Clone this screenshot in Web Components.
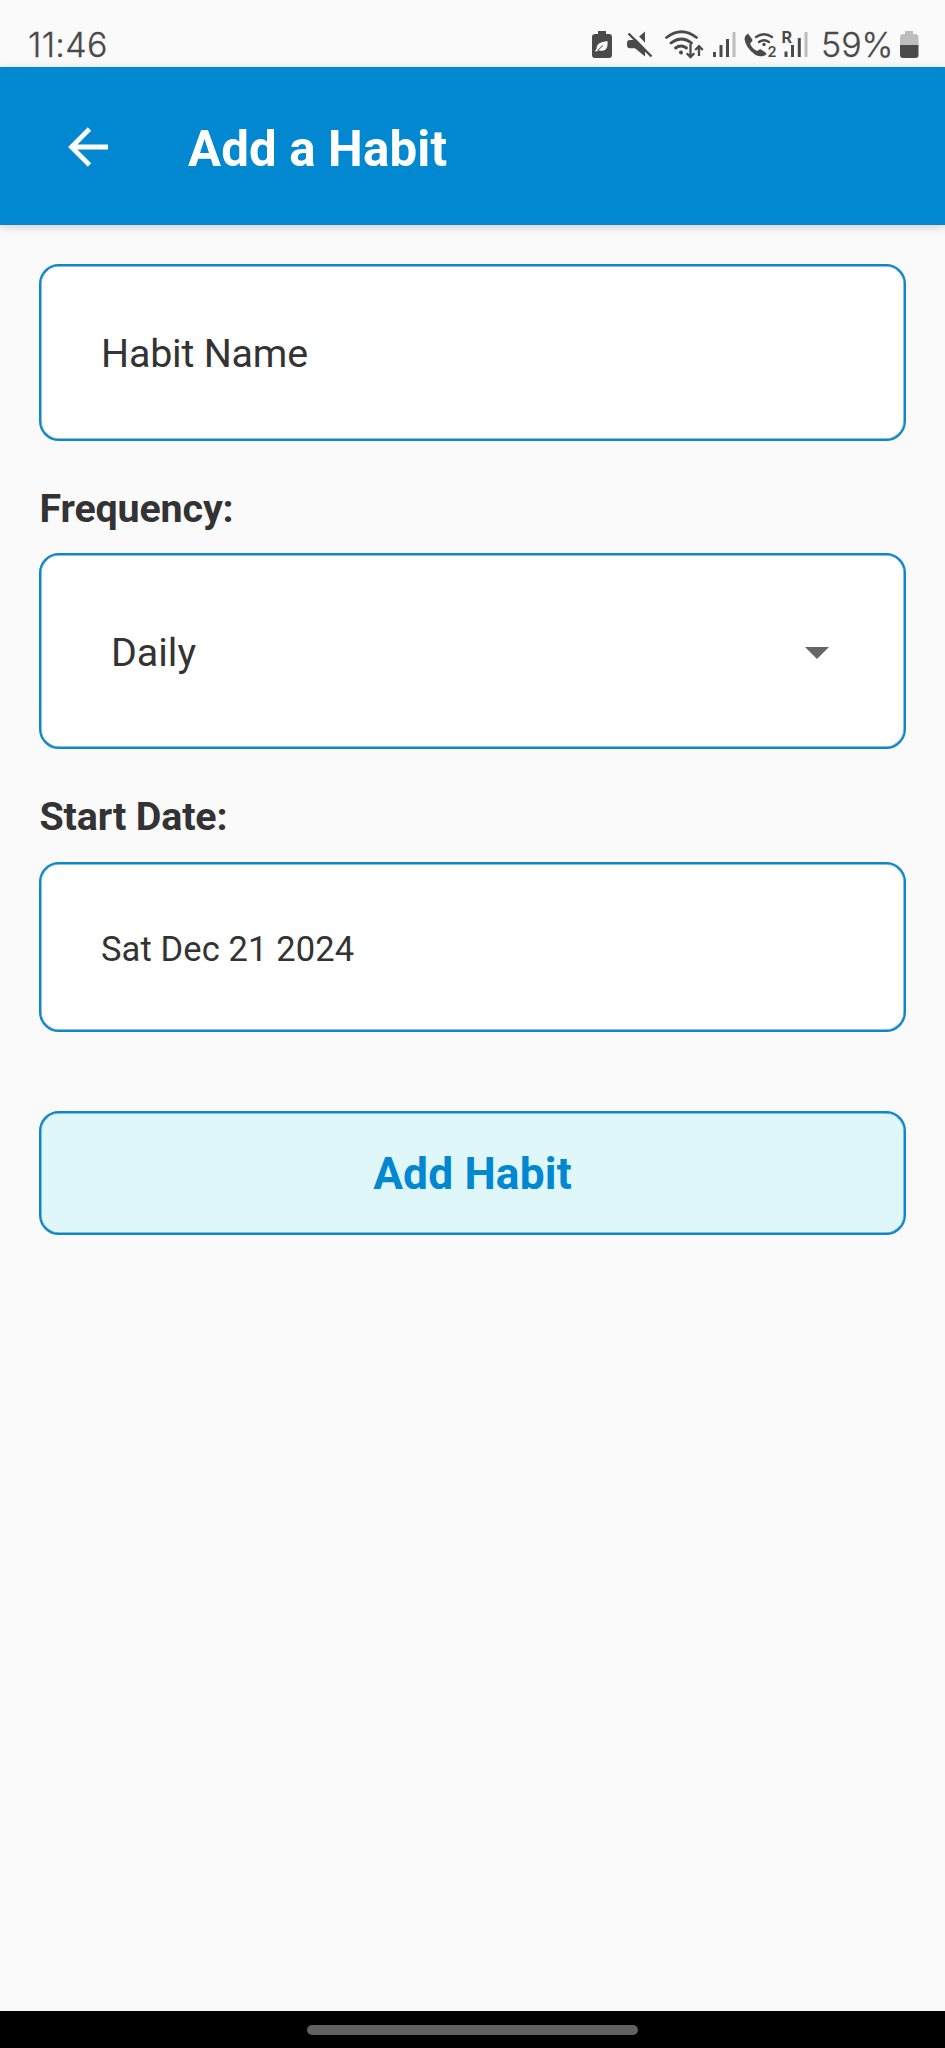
<!DOCTYPE html>
<html lang="en">
<head>
<meta charset="utf-8">
<title>Add a Habit</title>
<style>
html,body{margin:0;height:100%;background:#fafafa}
body{font-family:Roboto,"Liberation Sans",sans-serif;color:#333}
</style>
</head>
<body>
<habit-screen></habit-screen>
<script>
function define(name, html){
  const t = document.createElement('template');
  t.innerHTML = html;
  customElements.define(name, class extends HTMLElement{
    constructor(){
      super();
      this.attachShadow({mode:'open'}).append(t.content.cloneNode(true));
    }
  });
}

define('status-bar', `
<style>
:host{display:flex;box-sizing:border-box;height:67px;padding:28px 26px 0 28px;color:#4a4a4a;font:300 34px/34px Inter,sans-serif}
.time{flex:1;letter-spacing:.3px;-webkit-text-stroke:.3px}
.pct{width:79px;margin-left:-2px;letter-spacing:0;-webkit-text-stroke:.3px}
svg{display:block;height:34px;fill:currentColor;flex:none}
.s{fill:none;stroke:currentColor}
.time,.pct{white-space:nowrap}
</style>
<span class="time">11:46</span>
<svg width="34" viewBox="592 28 34 34"><path d="M598 31h8v3h3q3 0 3 3v18q0 3-3 3h-14q-3 0-3-3v-18q0-3 3-3h3z"/><path fill="#fafafa" d="M607.500 41c.6 6-1 9.500-5 9.700-2 .1-3.700-.2-4.500-.5l-2 1.500-1-1.300 1.700-1.400c-.6-4.700 3-7 10.800-8z"/><path class="s" stroke-width="1" d="M598 50l5-4.500"/></svg>
<svg width="39" viewBox="626 28 39 34"><path d="M627 43q0-3 3-3h5l10-8.500v25l-10-8.300h-5q-3 0-3-3z"/><path stroke="#fafafa" stroke-width="4" d="M631 31l23 24"/><path stroke="currentColor" stroke-width="2.400" d="M628.500 33.500l23 23"/></svg>
<svg width="47" viewBox="665 28 47 34"><g class="s" stroke-width="2.800" stroke-linecap="round"><path d="M666.500 37.500q15-11.500 30 0M671 43q10.500-8 20.500 0M675.500 48q5.500-4 11 0"/></g><circle cx="681" cy="52.500" r="2"/><path class="s" stroke-width="2.300" d="M690.500 44v13M686.700 53.200l3.800 3.800 3.800-3.800M699 56V46M695.200 50l3.800-3.800 3.800 3.800"/></svg>
<svg width="32" viewBox="712 28 32 34"><path d="M713 52h3v5h-3zM719.500 45h3v12h-3zM726 39h3v18h-3z"/><path fill="#bdbdbd" d="M732.500 32h3v25h-3z"/></svg>
<svg width="38" viewBox="744 28 38 34"><path d="M748 33.500l4 5.500q1 1.500-.5 3l-1.500 1.500q1.700 4.500 7 7.500l2-1.300q1.300-.8 2.500 0l4.500 3.300q.8.700 0 1.700-4.500 3-10.500.2Q745.500 48 744.500 39q-.2-3 3.500-5.500z"/><g class="s" stroke-width="2.300" stroke-linecap="round"><path d="M756 37q8-5.500 16 0M759 42q5-3.500 10 0"/></g><circle cx="764" cy="44.500" r="1.700"/><text x="767.500" y="56.500" font-family="Inter,sans-serif" font-size="14.500" font-weight="600">2</text></svg>
<svg width="41" viewBox="782 28 41 34"><text x="781.500" y="42.500" font-family="Roboto,sans-serif" font-size="16.500" font-weight="700">R</text><path d="M784.500 51.500h3v5.500h-3zM791 45h3v12h-3zM797.800 38h3v19h-3z"/><path fill="#bdbdbd" d="M804.500 32h3v25h-3z"/></svg>
<span class="pct">59%</span>
<svg width="19" viewBox="900 28 19 34"><path fill="#bdbdbd" d="M905 31h8v3h2q3.500 0 3.500 3.500V46H900v-8.500q0-3.500 3-3.500h2z"/><path d="M900 45h18.500v10q0 3-3 3H903q-3 0-3-3z"/></svg>
`);

define('app-header', `
<style>
:host{display:flex;align-items:center;box-sizing:border-box;height:158px;padding-left:68px;background:#0288d1;color:#fff;box-shadow:0 2px 9px rgba(0,0,0,.18)}
svg{display:block;margin:1px 80px 0 0}
h1{margin:5px 0 0;font:700 49.200px/58px Roboto,sans-serif;letter-spacing:.15px;white-space:nowrap}
</style>
<svg width="40" height="40" viewBox="0 0 40 40" fill="none" stroke="#fff" stroke-width="4.800"><path d="M40 20H4M21.500 2L3.500 20l18 18"/></svg>
<h1><slot></slot></h1>
`);

define('outlined-box', `
<style>
:host{display:flex;align-items:center;box-sizing:border-box;border:2px solid #0e86c8;box-shadow:inset 0 0 0 .5px #0e86c8;border-radius:20px;background:#fff;font-size:39.400px;line-height:46px;white-space:nowrap}
</style>
<slot></slot>
`);

define('field-label', `
<style>:host{display:block;font:700 39.400px/46px Roboto,sans-serif;letter-spacing:-.15px}</style>
<slot></slot>
`);

define('drop-arrow', `
<style>:host{display:block}svg{display:block}</style>
<svg width="24" height="12" viewBox="0 0 24 12"><path fill="#666" d="M0 0h24L12 12z"/></svg>
`);

define('nav-bar', `
<style>
:host{display:flex;justify-content:center;box-sizing:border-box;height:37px;padding-top:14px;background:#000}
i{width:331px;height:10px;border-radius:5px;background:#616161}
</style><i></i>
`);

define('habit-screen', `
<style>
:host{display:flex;flex-direction:column;height:2048px;background:#fafafa;overflow:hidden}
main{flex:1;display:flex;flex-direction:column;padding:39px 39px 0}
.name{height:177px;padding:3px 60px 0;letter-spacing:-.2px}
field-label{margin:45px 0 21px .5px}
.freq{height:196px;padding:3px 75px 0 70px;justify-content:space-between}
.freq span{padding-top:1px}
field-label.start{margin:45px 0 22px .5px}
.date{height:170px;padding:4px 60px 0;font-size:34.500px;letter-spacing:.12px}
.add{height:124px;margin-top:79px;padding-top:1px;justify-content:center;background:#e0f7fa;color:#0288d1;font-size:44.300px;font-weight:700;letter-spacing:.15px}
</style>
<status-bar></status-bar>
<app-header>Add a Habit</app-header>
<main>
<outlined-box class="name">Habit Name</outlined-box>
<field-label>Frequency:</field-label>
<outlined-box class="freq"><span>Daily</span><drop-arrow></drop-arrow></outlined-box>
<field-label class="start">Start Date:</field-label>
<outlined-box class="date">Sat Dec 21 2024</outlined-box>
<outlined-box class="add">Add Habit</outlined-box>
</main>
<nav-bar></nav-bar>
`);
</script>
</body>
</html>
